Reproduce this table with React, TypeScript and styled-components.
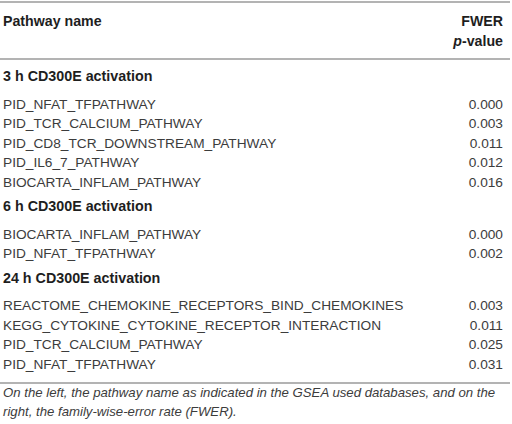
import React from "react";
import styled, { createGlobalStyle } from "styled-components";

const Global = createGlobalStyle`
  html, body { margin: 0; padding: 0; background: #ffffff; }
  body { font-family: "Liberation Sans", Arial, sans-serif; }
`;

const Page = styled.div`
  width: 510px;
  padding-top: 1px;
`;

const Table = styled.table`
  width: 100%;
  border-collapse: collapse;
  font-size: 13.7px;
  line-height: 19.5px;
  color: #3c3c3c;
  border-top: 2px solid #b3b3b3;
  border-bottom: 2px solid #b3b3b3;
`;

const HeadCell = styled.th<{ $right?: boolean }>`
  text-align: ${(p) => (p.$right ? "right" : "left")};
  vertical-align: top;
  font-weight: 700;
  font-size: 14.2px;
  line-height: 19.5px;
  color: #1e1e1e;
  padding: 9px ${(p) => (p.$right ? "7px" : "0")} 7px ${(p) => (p.$right ? "0" : "3px")};
  border-bottom: 2px solid #b3b3b3;
`;

const GroupCell = styled.td<{ $first?: boolean }>`
  font-weight: 700;
  font-size: 14.3px;
  color: #1e1e1e;
  padding: ${(p) => (p.$first ? "7px" : "5px")} 0 8px 3px;
`;

const Cell = styled.td<{ $right?: boolean; $last?: boolean }>`
  text-align: ${(p) => (p.$right ? "right" : "left")};
  padding: 0 ${(p) => (p.$right ? "7px" : "0")} ${(p) => (p.$last ? "8px" : "0")}
    ${(p) => (p.$right ? "0" : "3px")};
  white-space: nowrap;
`;

const Caption = styled.p`
  margin: 0;
  padding: 0 0 0 3px;
  font-style: italic;
  font-size: 13.2px;
  line-height: 18.5px;
  color: #3c3c3c;
`;

type Group = { title: string; rows: [string, string][] };

const groups: Group[] = [
  {
    title: "3 h CD300E activation",
    rows: [
      ["PID_NFAT_TFPATHWAY", "0.000"],
      ["PID_TCR_CALCIUM_PATHWAY", "0.003"],
      ["PID_CD8_TCR_DOWNSTREAM_PATHWAY", "0.011"],
      ["PID_IL6_7_PATHWAY", "0.012"],
      ["BIOCARTA_INFLAM_PATHWAY", "0.016"],
    ],
  },
  {
    title: "6 h CD300E activation",
    rows: [
      ["BIOCARTA_INFLAM_PATHWAY", "0.000"],
      ["PID_NFAT_TFPATHWAY", "0.002"],
    ],
  },
  {
    title: "24 h CD300E activation",
    rows: [
      ["REACTOME_CHEMOKINE_RECEPTORS_BIND_CHEMOKINES", "0.003"],
      ["KEGG_CYTOKINE_CYTOKINE_RECEPTOR_INTERACTION", "0.011"],
      ["PID_TCR_CALCIUM_PATHWAY", "0.025"],
      ["PID_NFAT_TFPATHWAY", "0.031"],
    ],
  },
];

export default function App() {
  return (
    <Page>
      <Global />
      <Table>
        <thead>
          <tr>
            <HeadCell>Pathway name</HeadCell>
            <HeadCell $right>
              FWER
              <br />
              <i>p</i>-value
            </HeadCell>
          </tr>
        </thead>
        <tbody>
          {groups.map((g, gi) => (
            <React.Fragment key={g.title}>
              <tr>
                <GroupCell colSpan={2} $first={gi === 0}>
                  {g.title}
                </GroupCell>
              </tr>
              {g.rows.map(([name, v], i) => {
                const isLast = gi === groups.length - 1 && i === g.rows.length - 1;
                return (
                  <tr key={name + i}>
                    <Cell $last={isLast}>{name}</Cell>
                    <Cell $right $last={isLast}>
                      {v}
                    </Cell>
                  </tr>
                );
              })}
            </React.Fragment>
          ))}
        </tbody>
      </Table>
      <Caption>
        On the left, the pathway name as indicated in the GSEA used databases, and on the
        right, the family-wise-error rate (FWER).
      </Caption>
    </Page>
  );
}
